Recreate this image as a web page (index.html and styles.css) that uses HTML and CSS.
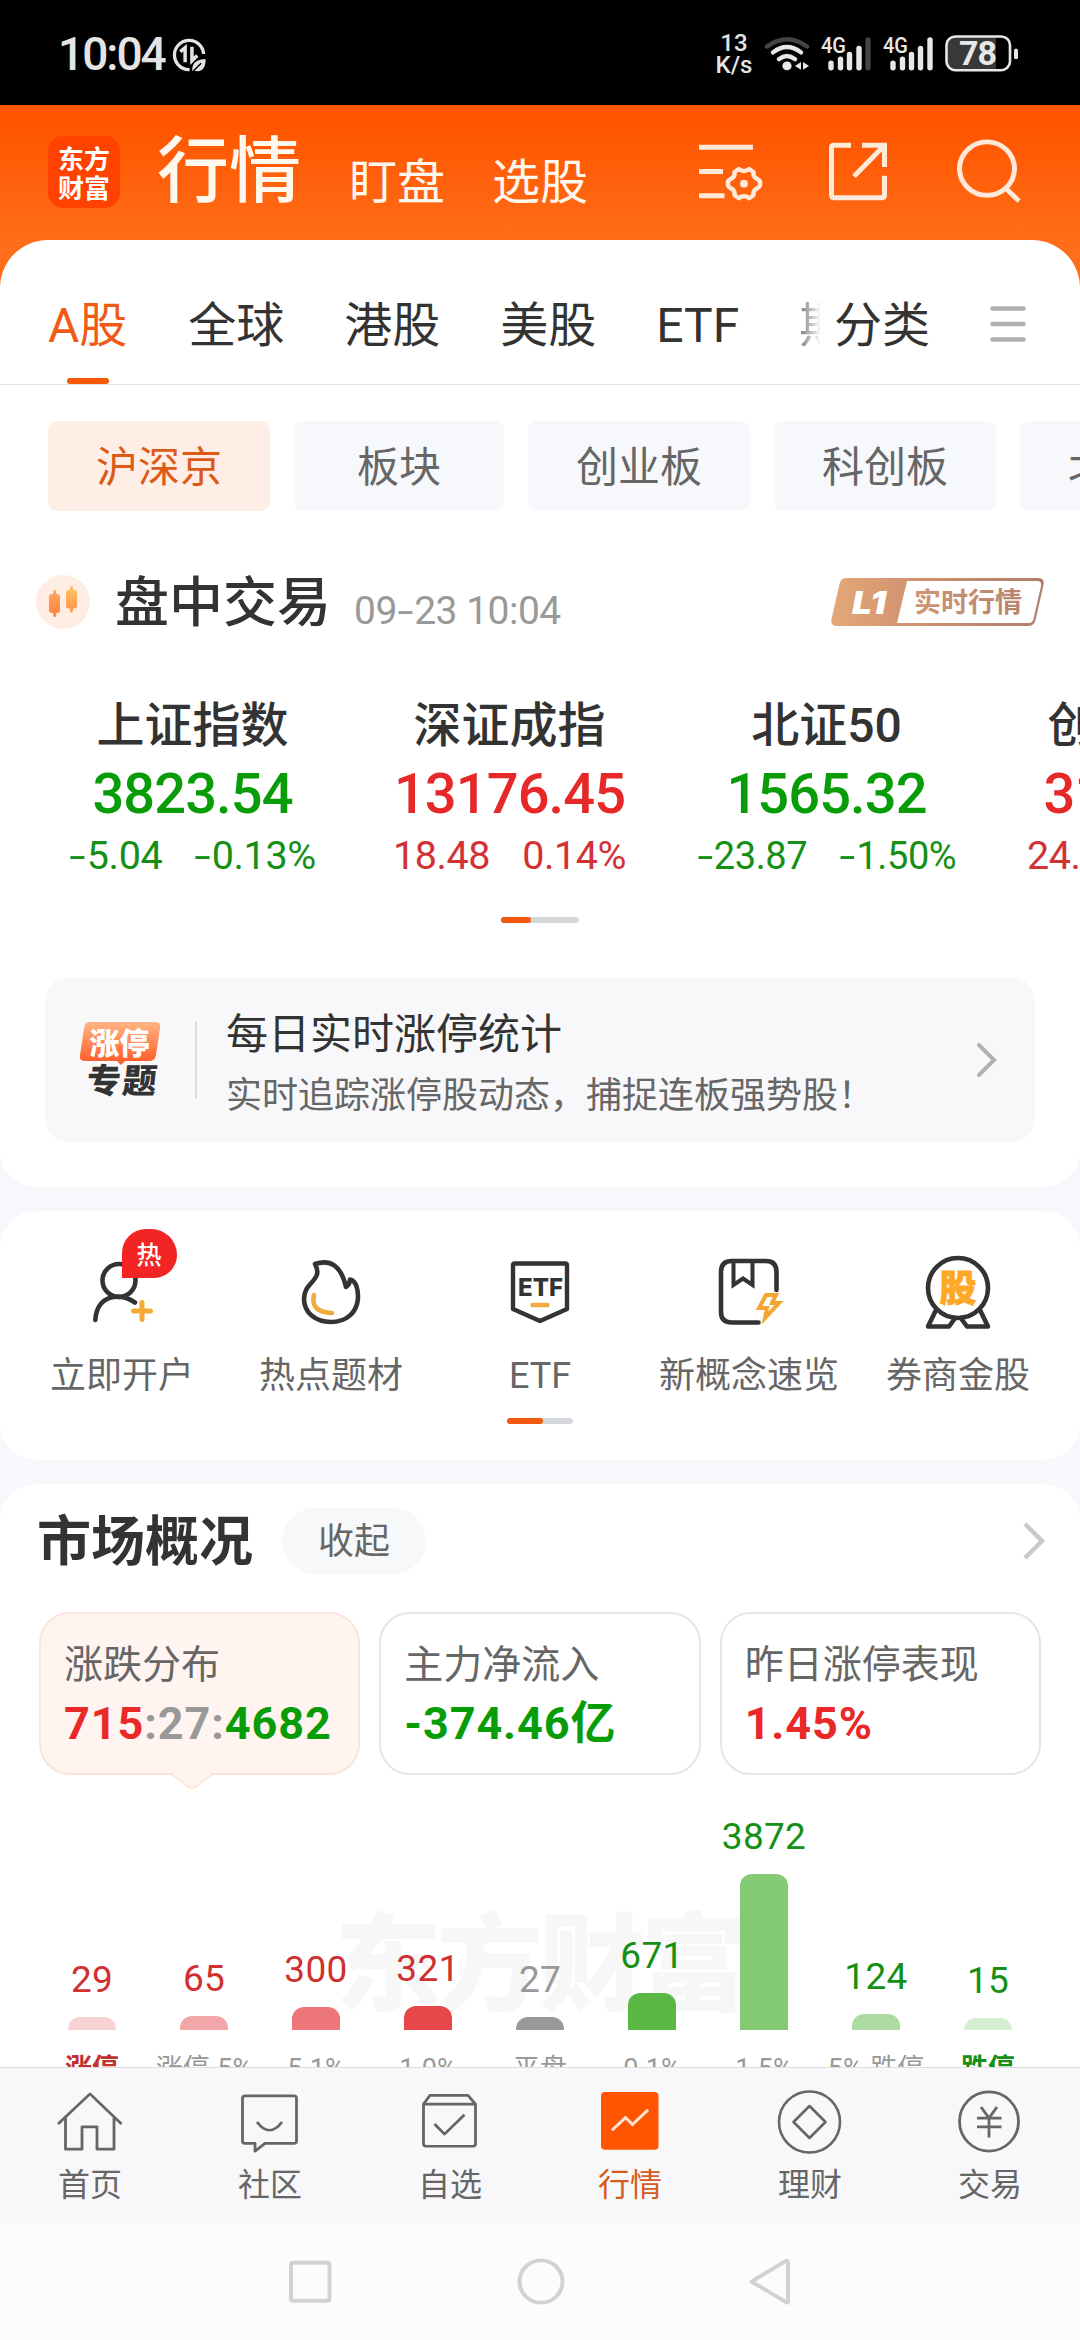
FILE: index.html
```html
<!DOCTYPE html>
<html lang="zh-CN">
<head>
<meta charset="utf-8">
<meta name="viewport" content="width=1080">
<title>行情</title>
<link rel="stylesheet" href="styles.css">
</head>
<body>
<div class="phone">

  <div class="status">
    <span class="status-time">10:04</span>
    <svg class="status-saver" width="35" height="35" viewBox="0 0 36 36" fill="none" stroke="#e4e4e4">
      <path d="M32.500 18A15 15 0 1 0 17.500 33.500" stroke-width="3.400" transform="rotate(-2 18 18)"/>
      <path d="M8.500 15L13.500 11V26" stroke-width="3.600"/>
      <path d="M20.500 10V24.500L26 19" stroke-width="3.600"/>
      <path d="M21 35C20 27 25 23 34.500 22.500C35 31 31 36 24 35Z" fill="#e4e4e4" stroke="none"/>
      <path d="M22 35L30 27" stroke="#000" stroke-width="1.500"/>
    </svg>
    <span class="status-speed"><span>13</span><span>K/s</span></span>
    <svg class="status-icons" width="255" height="42.600" viewBox="764 34 255 44" preserveAspectRatio="none" fill="none" stroke="#e8e8e8" stroke-linecap="round">
      <path d="M767 48Q787 33 807 48" stroke="#444" stroke-width="4.500"/>
      <path d="M773 54Q787 43 801 54" stroke-width="4.500"/>
      <path d="M779 61Q787 54.500 795 61" stroke-width="4.500"/>
      <circle cx="787" cy="68" r="4.600" fill="#e8e8e8" stroke="none"/>
      <path d="M801 64V72L795 68ZM803 64V72L809 68Z" fill="#e8e8e8" stroke="none"/>
      <g stroke-width="5.400">
        <path d="M831 65V70M840.500 61V70M849.500 56V70M859 50V70"/><path d="M868 41V70" stroke="#444"/>
        <path d="M893 65V70M902.500 61V70M911.500 56V70M920.500 50V70M930 41V70"/>
      </g>
      <g class="status-net" fill="#e8e8e8" stroke="none"><text x="821" y="55" textLength="25" lengthAdjust="spacingAndGlyphs">4G</text><text x="883" y="55" textLength="25" lengthAdjust="spacingAndGlyphs">4G</text></g>
      <path d="M956 38H996V72H956Q947 72 947 63V47Q947 38 956 38Z" fill="#383838" stroke="none"/>
      <rect x="946.500" y="37.500" width="63.500" height="35" rx="9" stroke-width="2.600"/>
      <path d="M1016 52V59" stroke-width="4"/>
      <text class="status-level" x="977.500" y="67" fill="#e8e8e8" stroke="none" text-anchor="middle">78</text>
    </svg>
  </div>

  <header class="header">
    <div class="logo"><span>东方</span><span>财富</span></div>
    <h1 class="header-title">行情</h1>
    <span class="header-link">盯盘</span>
    <span class="header-link">选股</span>
    <svg class="header-icons" width="330" height="68" viewBox="696 142 330 70" preserveAspectRatio="none" fill="none" stroke="#ffe9d8" stroke-width="5">
      <path d="M699 152.500H753M699 177.500H723M699 202.500H724.500"/>
      <path d="M739 175Q744 179 749 175L753.500 178Q753 183 756 184.500Q761 187 760 190Q761 193 756 195.500Q753 197 753.500 202L749 205Q744 201 739 205L734.500 202Q735 197 732 195.500Q727 193 728 190Q727 187 732 184.500Q735 183 734.500 178Z" stroke-width="4.400" stroke-linejoin="round"/>
      <circle cx="744" cy="190" r="4" fill="#ffe9d8" stroke="none"/>
      <path d="M851 150.500H834Q831.500 150.500 831.500 153V202Q831.500 204.500 834 204.500H882Q884.500 204.500 884.500 202V182M862 150.500H884.500V173M884 151L854 182.500"/>
      <circle cx="987" cy="174.500" r="27.500"/><path d="M1006 195L1019 208"/>
    </svg>
  </header>

  <main>
  <section class="sheet">
    <nav class="tabs">
      <span class="tab tab-on">A股</span><span class="tab">全球</span><span class="tab">港股</span><span class="tab">美股</span><span class="tab">ETF</span><span class="tab tab-fade">期</span><span class="tab tab-class">分类</span>
      <svg class="burger" width="36" height="36" viewBox="0 0 36 36" stroke="#b0b0b0" stroke-width="4.500" stroke-linecap="round"><path d="M2.500 2.500H33.500M2.500 18H33.500M2.500 33.500H33.500"/></svg>
    </nav>

    <div class="chips">
      <span class="chip chip-on">沪深京</span><span class="chip">板块</span><span class="chip">创业板</span><span class="chip">科创板</span><span class="chip">北交所</span>
    </div>

    <div class="session">
      <svg width="54" height="54" viewBox="0 0 54 54">
        <defs>
          <linearGradient id="cA" x1="0" y1="0" x2="0" y2="1"><stop offset="0" stop-color="#ffa45c"/><stop offset="1" stop-color="#ff8440"/></linearGradient>
          <linearGradient id="cB" x1="0" y1="0" x2="0" y2="1"><stop offset="0" stop-color="#ffbe62"/><stop offset="1" stop-color="#ff9a4c"/></linearGradient>
        </defs>
        <circle cx="27" cy="27" r="27" fill="#ffede4"/>
        <g fill="url(#cA)"><rect x="17.200" y="15" width="3" height="27" rx="1.500"/><rect x="13" y="19" width="11" height="19" rx="3"/></g>
        <g fill="url(#cB)"><rect x="34" y="11" width="3" height="26.500" rx="1.500"/><rect x="30" y="15" width="11" height="18.500" rx="3"/></g>
      </svg>
      <h2 class="session-title">盘中交易</h2>
      <span class="session-time">09<i class="sign">-</i>23 10:04</span>
      <svg class="level" width="214" height="48" viewBox="0 0 214 48">
        <defs>
          <linearGradient id="lv" x1="0" x2="1"><stop offset="0" stop-color="#e3a878"/><stop offset=".35" stop-color="#d29470"/><stop offset="1" stop-color="#b07c6c"/></linearGradient>
          <linearGradient id="lt" x1="0" x2="1"><stop offset="0" stop-color="#cf9676"/><stop offset="1" stop-color="#b8836c"/></linearGradient>
        </defs>
        <path d="M15 0H207Q214 0 212.500 7L204.500 42Q203 48 197 48H6Q-1 48 .500 41L8.500 6Q10 0 15 0Z" fill="url(#lv)"/>
        <path d="M76 3H206Q211 3 210 8L202.500 41Q201.500 45 198 45H66Z" fill="#fff"/>
        <text class="level-l1" x="21" y="36" textLength="34" lengthAdjust="spacingAndGlyphs">L1</text>
        <text class="level-text" x="83" y="34" fill="url(#lt)">实时行情</text>
      </svg>
    </div>

    <div class="indices">
      <div class="index down"><span class="index-name">上证指数</span><span class="index-value">3823.54</span><span class="index-diff"><span><i class="sign">-</i>5.04</span><span><i class="sign">-</i>0.13%</span></span></div>
      <div class="index up"><span class="index-name">深证成指</span><span class="index-value">13176.45</span><span class="index-diff"><span>18.48</span><span>0.14%</span></span></div>
      <div class="index down"><span class="index-name">北证50</span><span class="index-value">1565.32</span><span class="index-diff index-diff-s"><span><i class="sign">-</i>23.87</span><span><i class="sign">-</i>1.50%</span></span></div>
      <div class="index up"><span class="index-name">创业板指</span><span class="index-value">3131.96</span><span class="index-diff"><span>24.12</span><span>0.78%</span></span></div>
    </div>
    <div class="pager pager-a"><i></i></div>

    <div class="banner">
      <svg class="banner-logo" width="84" height="78" viewBox="0 0 84 78">
        <defs><linearGradient id="zt" x1="0" y1="0" x2="0" y2="1"><stop offset="0" stop-color="#ffb685"/><stop offset="1" stop-color="#ff5722"/></linearGradient></defs>
        <path d="M10 1H76Q82 1 81 7L77 34Q76 40 70 40H46L42 44L38 40H6Q0 40 1 34L5 7Q6 1 10 1Z" fill="url(#zt)"/>
        <text class="banner-a" x="10.500" y="33">涨停</text>
        <text class="banner-b" x="7" y="72" textLength="70" transform="skewX(-6) translate(7 0)">专题</text>
      </svg>
      <i class="banner-line"></i>
      <div class="banner-text"><strong>每日实时涨停统计</strong><span>实时追踪涨停股动态，捕捉连板强势股！</span></div>
      <svg class="banner-arrow" width="22" height="36" viewBox="0 0 22 36" fill="none" stroke="#b0b0b0" stroke-width="4" stroke-linecap="round"><path d="M3 3L18 18L3 33"/></svg>
    </div>
  </section>

  <section class="shortcuts">
    <div class="shortcut-row">
      <div class="shortcut">
        <svg width="80" height="80" viewBox="81 1250 80 80" fill="none" stroke="#333" stroke-width="4.600" stroke-linecap="round">
          <circle cx="118" cy="1280.500" r="16.500"/><path d="M94.300 1320C96 1295 118 1292 134 1302.500"/><path d="M132.500 1311H149.500M141 1302.500V1319.500" stroke="#f6aa35" stroke-width="5"/>
        </svg>
        <span>立即开户</span><b class="hot">热</b>
      </div>
      <div class="shortcut">
        <svg width="80" height="80" viewBox="291 1250 80 80" fill="none" stroke="#333" stroke-width="4.600" stroke-linecap="round" stroke-linejoin="round">
          <path d="M315 1264C330 1259 341 1265 346 1287Q350 1284 350 1279.500C356 1281 358 1289 358 1298C357 1313 346 1322 331 1322C316 1322 304 1313 304 1299C304 1281 324 1281 315 1264Z"/>
          <path d="M314 1295Q310 1312 332 1313" stroke="#f0aa40"/>
        </svg>
        <span>热点题材</span>
      </div>
      <div class="shortcut">
        <svg width="80" height="80" viewBox="500 1250 80 80" fill="none" stroke="#333" stroke-width="4.400" stroke-linejoin="round">
          <path d="M515 1263.500H565Q567 1263.500 567 1265.500V1309L540 1321L513 1309V1265.500Q513 1263.500 515 1263.500Z"/><path d="M532.500 1305H547.500" stroke="#f0aa40" stroke-linecap="round"/>
          <text class="etf" x="518" y="1295.500" textLength="45" lengthAdjust="spacingAndGlyphs" fill="#333" stroke="none">ETF</text>
        </svg>
        <span>ETF</span>
      </div>
      <div class="shortcut">
        <svg width="80" height="80" viewBox="709 1250 80 80" fill="none" stroke="#333" stroke-width="4.600" stroke-linecap="round">
          <path d="M776.500 1290V1272Q776.500 1261 766 1261H732Q721 1261 721 1272V1312Q721 1322.500 732 1322.500H758.500"/>
          <path d="M733.500 1262V1285L743 1278.500L752.500 1285V1262" stroke-width="4" stroke-linecap="butt"/>
          <path d="M766 1295H776L772 1303H779L765 1318L767 1308H759Z" stroke="#f4a634" stroke-width="4"/>
        </svg>
        <span>新概念速览</span>
      </div>
      <div class="shortcut">
        <svg width="80" height="80" viewBox="917 1250 80 80" fill="none" stroke="#333" stroke-width="4.600" stroke-linejoin="round">
          <circle cx="957" cy="1288" r="30"/><path d="M935 1310L927 1326.500H948L955 1317M979 1310L987 1326.500H966L959 1317"/>
          <text class="gu" x="957" y="1302" text-anchor="middle" fill="#ffa726" stroke="#ffa726">股</text>
        </svg>
        <span>券商金股</span>
      </div>
    </div>
    <div class="pager pager-b"><i></i></div>
  </section>

  <section class="market">
    <div class="market-head">
      <h2>市场概况</h2><span class="fold">收起</span>
      <svg width="24" height="40" viewBox="0 0 24 40" fill="none" stroke="#c9c9c9" stroke-width="4.500"><path d="M3 3L20 20L3 37"/></svg>
    </div>
    <div class="cards">
      <div class="card card-on"><span>涨跌分布</span><b><em class="red">715</em>:27:<em class="green">4682</em></b>
        <svg class="tip" width="42" height="17" viewBox="0 0 42 15" preserveAspectRatio="none"><path d="M1 0C6 3 12 9 18 13H24C30 9 36 3 41 0Z" fill="#fff4ef"/><path d="M0 1.500C6 3 12 9 18 13H24C30 9 36 3 42 1.500" fill="none" stroke="#fbe4d8" stroke-width="1.500"/></svg>
      </div>
      <div class="card"><span>主力净流入</span><b class="green">-374.46亿</b></div>
      <div class="card"><span>昨日涨停表现</span><b class="red">1.45%</b></div>
    </div>
    <div class="chart">
      <div class="watermark">东方财富</div>
      <div class="col col-up"><span>29</span><i style="height:13px;background:#f9d3d3"></i></div>
      <div class="col col-up"><span>65</span><i style="height:14px;background:#f3a6a8"></i></div>
      <div class="col col-up"><span>300</span><i style="height:23px;background:#ee7679"></i></div>
      <div class="col col-up"><span>321</span><i style="height:24px;background:#e84749"></i></div>
      <div class="col"><span>27</span><i style="height:13px;background:#999"></i></div>
      <div class="col col-down"><span>671</span><i style="height:37px;background:#5bb845"></i></div>
      <div class="col col-down"><span>3872</span><i style="height:156px;background:#84ca75"></i></div>
      <div class="col col-down"><span>124</span><i style="height:16px;background:#addca2"></i></div>
      <div class="col col-down"><span>15</span><i style="height:12px;background:#d6eed1"></i></div>
    </div>
    <div class="axis">
      <span class="axis-up">涨停</span><span>涨停-5%</span><span>5-1%</span><span>1-0%</span><span>平盘</span><span>0-1%</span><span>1-5%</span><span>5%-跌停</span><span class="axis-down">跌停</span>
    </div>
  </section>
  </main>

  <nav class="tabbar">
    <div class="item">
      <svg width="70" height="64" viewBox="55 2091 70 66" preserveAspectRatio="none" fill="none" stroke="#666" stroke-width="2.800" stroke-linejoin="round"><path d="M58 2126L90 2095L121.500 2126M65.500 2120V2152H82V2129H97V2152H114V2120"/></svg>
      <span>首页</span>
    </div>
    <div class="item">
      <svg width="70" height="64" viewBox="235 2091 70 66" preserveAspectRatio="none" fill="none" stroke="#666" stroke-width="2.800" stroke-linejoin="round"><path d="M245 2097H294Q296.500 2097 296.500 2099.500V2143.500Q296.500 2146 294 2146H265L255 2154V2146H245Q242.500 2146 242.500 2143.500V2099.500Q242.500 2097 245 2097Z"/><path d="M257 2124Q269.500 2141 282 2124"/></svg>
      <span>社区</span>
    </div>
    <div class="item">
      <svg width="70" height="64" viewBox="415 2091 70 66" preserveAspectRatio="none" fill="none" stroke="#666" stroke-width="2.800" stroke-linejoin="round"><path d="M423.500 2105.500L430 2096.500H468L475.500 2105.500V2146.500Q475.500 2149 473 2149H426Q423.500 2149 423.500 2146.500ZM423.500 2105.500H475.500"/><path d="M434.500 2126L444.500 2136.500L464.500 2116.500"/></svg>
      <span>自选</span>
    </div>
    <div class="item item-on">
      <svg width="70" height="64" viewBox="595 2091 70 66" preserveAspectRatio="none" fill="none" stroke="#ffe4cf" stroke-width="3"><rect x="601" y="2093" width="57.500" height="59.500" rx="4" fill="#f50" stroke="none"/><path d="M612 2132.500L625.500 2119.500L632.500 2126.500L648 2111.500"/></svg>
      <span>行情</span>
    </div>
    <div class="item">
      <svg width="70" height="64" viewBox="775 2091 70 66" preserveAspectRatio="none" fill="none" stroke="#666" stroke-width="2.600" stroke-linejoin="round"><ellipse cx="809.500" cy="2124" rx="30.500" ry="31.500"/><path d="M809.500 2107.500L825.500 2124L809.500 2140.500L793.500 2124Z"/></svg>
      <span>理财</span>
    </div>
    <div class="item">
      <svg width="70" height="64" viewBox="955 2091 70 66" preserveAspectRatio="none" fill="none" stroke="#666" stroke-width="2.800"><ellipse cx="989" cy="2123.500" rx="29.500" ry="30.500"/><path d="M981 2108.500L989 2120L997 2108.500M977 2120H1001.500M977 2129H1001.500M989 2119V2140"/></svg>
      <span>交易</span>
    </div>
  </nav>

  <div class="sysnav">
    <svg width="504" height="50" viewBox="287 2264 504 52" preserveAspectRatio="none" fill="none" stroke="#d2d2d2" stroke-width="4" stroke-linejoin="round"><rect x="290" y="2270" width="38.500" height="39.500" rx="2"/><ellipse cx="540" cy="2289.500" rx="21.500" ry="22"/><path d="M750.500 2289.500L785 2268Q787 2267.500 787 2269V2310Q787 2312 785 2311Z"/></svg>
  </div>
</div>
</body>
</html>
```
FILE: styles.css
```css
* { box-sizing: border-box; }

body {
  margin: 0;
  background: #f6f8fb;
  font-family: Roboto, "Noto Sans CJK SC", sans-serif;
  color: #333;
}

h1, h2 { margin: 0; font-weight: 400; }
em, i { font-style: normal; }
svg { display: block; flex: none; }
span { white-space: nowrap; }

.phone { width: 1080px; height: 2340px; overflow: hidden; display: flex; flex-direction: column; }
.red { color: #eb2828; }
.green { color: #089d08; }
.sign { display: inline-block; margin: 0 4px 0 3px; transform: scaleX(1.5); }

/* Status bar */
.status { flex: none; height: 105px; padding: 0 61px 0 58px; background: #000; color: #e4e4e4; display: flex; align-items: flex-start; }
.status-time { font: 500 46px/56px Roboto, sans-serif; padding-top: 26px; width: 114px; letter-spacing: -2px; }
.status-saver { margin-top: 37px; }
.status-speed { display: flex; flex-direction: column; align-items: center; margin-left: auto; padding-top: 32px; width: 38px; font: 500 24px/22px Roboto, sans-serif; }
.status-icons { margin: 33px 0 0 11px; }
.status-net { font: 500 23px Roboto, sans-serif; }
.status-level { font: 700 34px Roboto, sans-serif; letter-spacing: -1px; }

/* Header */
.header { flex: none; height: 185px; padding: 0 54px 50px 48px; background: linear-gradient(#ff5500 10%, #ff6f1b 80%); color: #fff8ee; display: flex; align-items: flex-start; }
.logo { flex: none; width: 72px; height: 72px; margin-top: 31px; padding-top: 7px; border-radius: 15px; background: #ff4200; color: #fff; display: flex; flex-direction: column; align-items: center; font: 700 26px/29px "Noto Sans CJK SC", sans-serif; }
.header-title { margin: 25px 0 0 37px; width: 144px; font-size: 72px; line-height: 84px; font-weight: 500; }
.header-link { font-size: 48px; line-height: 60px; margin: 48px 0 0 48px; }
.header-link + .header-link { margin-left: 47px; }
.header-icons { margin: 32px 0 0 auto; }

/* Sheet */
.sheet { height: 947px; margin-top: -50px; background: #fff; border-radius: 48px 48px 36px 36px; overflow: hidden; }
.tabs { display: flex; height: 145px; padding: 56px 54px 0 48px; gap: 60px; border-bottom: 1px solid #dfdfdf; font-size: 48px; line-height: 60px; }
.tab-on { width: 81px; color: #f05a14; position: relative; }
.tab-on::after { content: ""; position: absolute; left: 19px; bottom: 0; width: 42px; height: 6px; border-radius: 3px; background: #f95708; }
.tab-fade { width: 22px; overflow: hidden; color: transparent; background: linear-gradient(90deg, #777, #fff); background-clip: text; -webkit-background-clip: text; }
.tab-class { margin-left: -47px; }
.burger { margin: 10px 0 0 auto; }

.chips { display: flex; gap: 24px; padding: 36px 0 0 48px; overflow: hidden; }
.chip { flex: none; min-width: 210px; height: 90px; padding: 0 48px; border-radius: 9px; background: #f7f8fb; color: #666; font-size: 42px; line-height: 93px; text-align: center; }
.chip-on { background: #ffeee6; color: #dc5a16; }

.session { display: flex; align-items: center; height: 60px; margin: 61px 35px 0 36px; }
.session-title { margin: 4px 0 0 25px; font-size: 54px; line-height: 60px; font-weight: 500; }
.session-time { margin: 17px 0 0 23px; color: #999; font-size: 39px; line-height: 40px; letter-spacing: -.5px; }
.level { margin-left: auto; }
.level-l1 { font: italic 900 32px Inter, Roboto, sans-serif; fill: #fff; }
.level-text { font: 700 27px "Noto Sans CJK SC", sans-serif; }

.indices { display: flex; width: 1300px; margin: 63px 0 0 34px; }
.index { flex: none; width: 317px; display: flex; flex-direction: column; align-items: center; }
.index-name { color: #333; font-size: 48px; line-height: 62px; height: 60px; font-weight: 500; }
.index-value { margin-top: 9px; font-size: 56px; line-height: 60px; font-weight: 500; letter-spacing: -.9px; }
.index-diff { display: flex; gap: 32px; margin-top: 12px; font-size: 39.500px; line-height: 40px; letter-spacing: -.4px; }
.index-diff-s { font-size: 38px; }
.up { color: #e62828; }
.down { color: #089d08; }
.up .index-diff { color: #d23234; }
.down .index-diff { color: #159015; }

.pager { height: 6px; border-radius: 3px; background: #d4d7dc; }
.pager i { display: block; height: 6px; border-radius: 3px; background: #f2590f; }
.pager-a { width: 78px; margin: 41px auto 0; }
.pager-a i { width: 30px; }
.pager-b { width: 66px; margin: 20px auto 0; }
.pager-b i { width: 36px; }

.banner { display: flex; align-items: center; height: 165px; margin: 54px 45px 0; padding: 0 37px 0 34px; border-radius: 24px; background: #f8f8fa; }
.banner-a { font: 900 30px "Noto Sans CJK SC", sans-serif; fill: #fff; }
.banner-b { font: 900 34px "Noto Sans CJK SC", sans-serif; fill: #333; }
.banner-line { width: 2px; height: 78px; margin: 0 29px 0 32px; background: #dedede; }
.banner-text { display: flex; flex-direction: column; gap: 9px; padding-top: 9px; }
.banner-text strong { font-size: 42px; line-height: 54px; font-weight: 400; }
.banner-text span { font-size: 36px; line-height: 50px; color: #666; }
.banner-arrow { margin-left: auto; }

/* Shortcuts */
.shortcuts { height: 249px; margin-top: 24px; padding-top: 39px; background: #fff; border-radius: 36px; }
.shortcut-row { display: grid; grid-template-columns: repeat(5, 209px); justify-content: center; }
.shortcut { position: relative; display: flex; flex-direction: column; align-items: center; gap: 24px; color: #666; font-size: 36px; line-height: 44px; }
.hot { position: absolute; left: 104px; top: -21px; width: 55px; height: 49px; border-radius: 26px 28px 25px 0; background: #f22424; color: #fff; font: 500 25px/49px "Noto Sans CJK SC", sans-serif; text-align: center; }
.etf { font: 800 24px Inter, sans-serif; }
.gu { font: 900 37px "Noto Sans CJK SC", sans-serif; stroke-width: .8; }

/* Market overview */
.market { height: 583px; margin-top: 24px; padding: 22px 39px 0; background: #fff; border-radius: 36px 36px 0 0; overflow: hidden; }
.market-head { display: flex; align-items: center; height: 70px; margin-left: -2px; }
.market-head h2 { font-size: 54px; line-height: 66px; font-weight: 700; padding-top: 3px; }
.fold { width: 144px; height: 66px; margin-left: 29px; border-radius: 33px; background: #f6f8fa; color: #666; font-size: 36px; line-height: 68px; text-align: center; }
.market-head svg { margin: 0 -5px 0 auto; }
.cards { display: grid; grid-template-columns: repeat(3, 1fr); gap: 19px; margin-top: 36px; }
.card { position: relative; display: flex; flex-direction: column; height: 163px; padding: 25px 0 0 23px; border: 2px solid #e6e6e6; border-radius: 31px; color: #666; font-size: 39px; line-height: 52px; }
.card b { font: 700 45px/56px Roboto, "Noto Sans CJK SC", sans-serif; margin-top: 5px; white-space: nowrap; letter-spacing: .9px; }
.card-on { background: #fff4ef; border-color: #fbe4d8; }
.card-on b { color: #999; }
.tip { position: absolute; left: 130px; top: 159px; }

.chart { position: relative; display: grid; grid-template-columns: repeat(9, 112px); align-items: end; height: 255px; margin: 0 -3px; }
.watermark { position: absolute; left: 299px; top: 121px; width: 412px; color: #f7f7f7; font: 900 106px/120px "Noto Sans CJK SC", sans-serif; letter-spacing: -4px; white-space: nowrap; }
.col { position: relative; display: flex; flex-direction: column; align-items: center; gap: 16px; color: #999; font: 400 37px/42px Roboto, sans-serif; letter-spacing: .3px; }
.col i { width: 48px; border-radius: 12px 12px 0 0; }
.col-up { color: #d03030; }
.col-down { color: #159015; }
.axis { display: grid; grid-template-columns: repeat(9, 112px); margin: 21px -3px 0; color: #999; font: 27px/36px Roboto, "Noto Sans CJK SC", sans-serif; text-align: center; }
.axis-up { color: #c23030; font-weight: 700; }
.axis-down { color: #159015; font-weight: 700; }

/* Bottom bars */
.tabbar { flex: none; display: grid; grid-template-columns: repeat(6, 180px); height: 157px; padding-top: 22px; border-top: 1px solid #dedee0; background: #f8f8fb; }
.item { display: flex; flex-direction: column; align-items: center; gap: 10px; color: #666; font-size: 32px; line-height: 42px; }
.item-on { color: #d65b20; }
.sysnav { flex: none; height: 116px; padding-top: 33px; background: #fcfcfc; display: flex; justify-content: center; }
```
